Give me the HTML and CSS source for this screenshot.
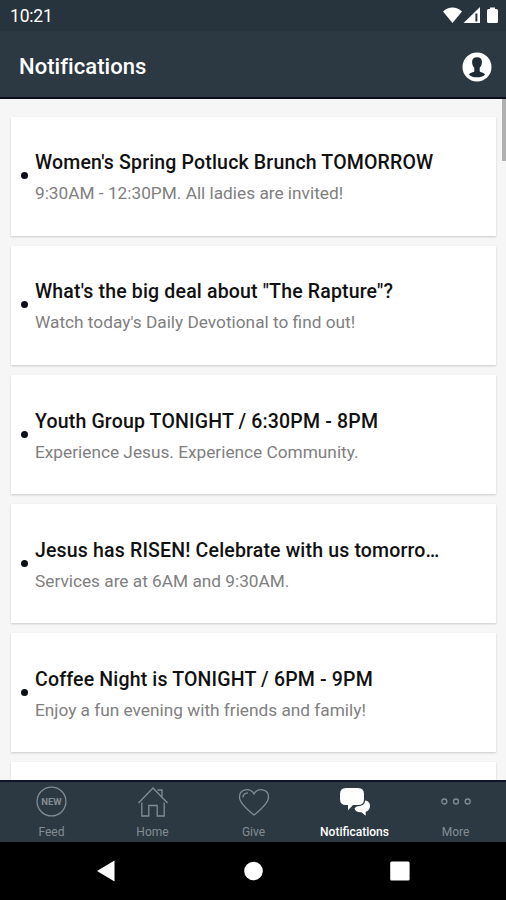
FILE: index.html
```html
<!DOCTYPE html>
<html lang="en">
<head>
    <meta charset="UTF-8">
    <meta name="viewport" content="width=device-width, initial-scale=1.0">
    <title>Notifications</title>
    <link rel="stylesheet" href="styles.css">
</head>
<body>
    <div class="status-bar">
        <span class="clock">10:21</span>
        <svg class="status-icons" width="58" height="20" viewBox="0 0 58 20">
            <path d="M0 5.5C5.5 .3 13.500 .3 19 5.500L9.500 17z" fill="#fff"/>
            <path d="M20.500 17L37 1v16z" fill="#fff"/>
            <path d="M33.400 7.500v8" stroke="#27333d" stroke-width="2"/>
            <path d="M47 1.500h5v1.500h1.500q1.500 0 1.500 1.500v11q0 1.500-1.500 1.500h-8q-1.500 0-1.500-1.500v-11q0-1.500 1.500-1.500h1.500z" fill="#fff"/>
        </svg>
    </div>
    <header class="app-bar">
        <h1>Notifications</h1>
        <svg class="profile" width="30" height="30" viewBox="0 0 30 30">
            <circle cx="15" cy="15" r="14.500" fill="#fff"/>
            <path d="M15 5.200c3.400 0 5 2 4.900 4.800-.1 2.800-1 4.600-2.200 5.800v3.400c.5 1.300 4.500 1 5.300 3.500-2 2-4.800 2.500-8 2.500s-6-.5-8-2.500c.8-2.500 4.800-2.200 5.300-3.500v-3.400c-1.200-1.200-2.100-3-2.200-5.800-.1-2.800 1.500-4.800 4.900-4.800z" fill="#1f2c36"/>
        </svg>
    </header>
    <main class="feed">
        <div class="card">
            <span class="dot"></span>
            <div class="card-text">
                <h2>Women's Spring Potluck Brunch TOMORROW</h2>
                <p>9:30AM - 12:30PM. All ladies are invited!</p>
            </div>
        </div>
        <div class="card">
            <span class="dot"></span>
            <div class="card-text">
                <h2>What's the big deal about "The Rapture"?</h2>
                <p>Watch today's Daily Devotional to find out!</p>
            </div>
        </div>
        <div class="card">
            <span class="dot"></span>
            <div class="card-text">
                <h2>Youth Group TONIGHT / 6:30PM - 8PM</h2>
                <p>Experience Jesus. Experience Community.</p>
            </div>
        </div>
        <div class="card">
            <span class="dot"></span>
            <div class="card-text">
                <h2>Jesus has RISEN! Celebrate with us tomorro…</h2>
                <p>Services are at 6AM and 9:30AM.</p>
            </div>
        </div>
        <div class="card">
            <span class="dot"></span>
            <div class="card-text">
                <h2>Coffee Night is TONIGHT / 6PM - 9PM</h2>
                <p>Enjoy a fun evening with friends and family!</p>
            </div>
        </div>
        <div class="card"></div>
        <div class="scrollbar"></div>
    </main>
    <nav class="tabs">
        <a class="tab">
            <svg width="32" height="32" viewBox="0 0 32 32">
                <circle cx="15.500" cy="16.500" r="14.400"/>
                <text class="badge-text" x="15.500" y="19.800">NEW</text>
            </svg>
            <span>Feed</span>
        </a>
        <a class="tab">
            <svg width="32" height="32" viewBox="0 0 32 32">
                <path d="M1.500 18L16 3l14.500 15M20.500 5h4.500v6.500M4.800 17.500v13.500h7V20.500h8.400v10.500h7v-13.500"/>
            </svg>
            <span>Home</span>
        </a>
        <a class="tab">
            <svg width="32" height="32" viewBox="0 0 32 32">
                <path d="M16 30C9 24.500 1.500 18 1.500 12 1.500 4 12 2 16 9c4-7 14.500-5 14.500 3C30.500 18 23 24.500 16 30z"/>
                <path d="M5 12.500c0-2.800 2-4.500 5-4.700"/>
            </svg>
            <span>Give</span>
        </a>
        <a class="tab active">
            <svg class="solid" width="32" height="32" viewBox="0 0 32 32">
                <path d="M26 15.500c3.300 .3 5 2.300 5 5.300 0 3.200-1.700 5.400-4.300 6v4l-4.200-3.600c-4 .3-6.500-1.200-7-4l2-1.800c5-.5 8.500-1.400 8.500-5.900z"/>
                <path d="M7 3h12q6 0 6 6v5q0 6-6 6h-5L9 25.200v-5.200H7q-6 0-6-6v-5q0-6 6-6z"/>
            </svg>
            <span>Notifications</span>
        </a>
        <a class="tab">
            <svg width="32" height="32" viewBox="0 0 32 32">
                <circle cx="4.300" cy="16.500" r="2.500"/>
                <circle cx="16" cy="16.500" r="2.500"/>
                <circle cx="27.700" cy="16.500" r="2.500"/>
            </svg>
            <span>More</span>
        </a>
    </nav>
    <div class="system-nav">
        <svg width="20" height="22" viewBox="0 0 20 22"><path d="M1 11L18.500 .5v21z"/></svg>
        <svg width="20" height="20" viewBox="0 0 20 20"><circle cx="10.500" cy="10" r="9.300"/></svg>
        <svg width="20" height="20" viewBox="0 0 20 20"><rect x=".2" y=".4" width="19.400" height="19.200" rx="1.500"/></svg>
    </div>
</body>
</html>
```
FILE: styles.css
```css
* {
    box-sizing: border-box;
}
body {
    margin: 0;
    height: 900px;
    display: flex;
    flex-direction: column;
    overflow: hidden;
    font-family: Roboto, "Liberation Sans", sans-serif;
    background-color: #000;
}
h1, h2, p {
    margin: 0;
}
.status-bar {
    height: 31px;
    flex: none;
    display: flex;
    align-items: center;
    justify-content: space-between;
    padding: 0 5px 0 10px;
    background-color: #27333d;
    color: #fff;
}
.clock {
    font-size: 17.5px;
    line-height: 20px;
    padding-top: 1px;
    letter-spacing: -0.2px;
}
.app-bar {
    height: 68px;
    flex: none;
    display: flex;
    align-items: center;
    justify-content: space-between;
    padding: 5px 14px 0 19px;
    background-color: #2c3943;
    border-bottom: 2px solid #0b1016;
    color: #fff;
}
.app-bar h1 {
    font-size: 22px;
    font-weight: 500;
    line-height: 26px;
    letter-spacing: 0.05px;
}
.feed {
    flex: 1;
    min-height: 0;
    position: relative;
    overflow: hidden;
    padding: 18px 10px 0 11px;
    background-color: #f6f6f6;
}
.card {
    height: 118.5px;
    margin-bottom: 10.6px;
    display: flex;
    padding: 34.35px 20px 0 10px;
    background-color: #fff;
    box-shadow: 0 1px 2px rgba(0, 0, 0, 0.18);
}
.dot {
    flex: none;
    width: 7px;
    height: 7px;
    margin: 21px 7px 0 0;
    border-radius: 50%;
    background-color: #0c0f18;
}
.card-text {
    white-space: nowrap;
}
.card h2 {
    font-size: 19.5px;
    font-weight: 500;
    line-height: 24px;
    letter-spacing: 0.17px;
    color: #111;
}
.card p {
    margin-top: 7px;
    font-size: 17.25px;
    font-weight: 400;
    line-height: 22px;
    color: #808080;
}
.scrollbar {
    position: absolute;
    top: 0;
    right: 0;
    width: 4px;
    height: 62px;
    background-color: #b0b0b0;
}
.tabs {
    height: 62px;
    flex: none;
    display: flex;
    padding-left: 1px;
    background-color: #2c3943;
    border-top: 2px solid #0d152b;
}
.tab {
    flex: 1;
    display: flex;
    flex-direction: column;
    align-items: center;
    padding-top: 3px;
    font-size: 12px;
    line-height: 16px;
    color: #858c92;
}
.tab svg {
    fill: none;
    stroke: #858c92;
    stroke-width: 1.3;
}
.tab span {
    margin-top: 7px;
}
.tab .badge-text {
    fill: #858c92;
    stroke: none;
    font-size: 9.5px;
    font-weight: 700;
    text-anchor: middle;
}
.tab .solid {
    fill: #fff;
    stroke: none;
}
.active {
    color: #fff;
    font-weight: 500;
}
.system-nav {
    height: 58px;
    flex: none;
    display: flex;
    align-items: center;
    justify-content: space-between;
    padding: 0 96px 0 96px;
    background-color: #000;
}
.system-nav svg {
    fill: #fff;
}
```
